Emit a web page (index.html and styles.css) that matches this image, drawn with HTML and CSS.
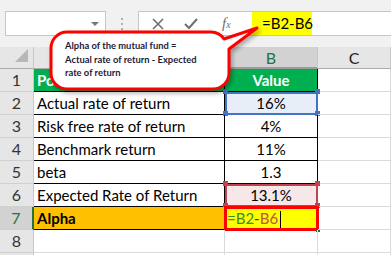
FILE: index.html
```html
<!DOCTYPE html>
<html lang="en">
<head>
    <meta charset="UTF-8">
    <title>Alpha of the mutual fund</title>
    <link rel="stylesheet" href="styles.css">
</head>
<body>

    <div class="formula-bar">
        <div class="name-box">
            <span class="name-arrow"></span>
        </div>
        <div class="grip">
            <span></span><span></span><span></span>
        </div>
        <div class="formula-box">
            <div class="fx-tools">
                <svg class="tool" width="14" height="14" viewBox="0 0 14 14">
                    <path d="M2 2 L12 12 M12 2 L2 12" stroke="#6f6f6f" stroke-width="1.6" fill="none"/>
                </svg>
                <svg class="tool" width="16" height="14" viewBox="0 0 16 14">
                    <path d="M2 7 L6 11 L14 2" stroke="#6f6f6f" stroke-width="2" fill="none"/>
                </svg>
                <span class="fx">f<sub>x</sub></span>
            </div>
            <div class="formula-input">
                <span class="formula-hl">=B2-B6</span>
            </div>
        </div>
    </div>

    <div class="sheet">
        <div class="corner"><span class="corner-tri"></span></div>
        <div class="col-head"></div>
        <div class="col-head active">B</div>
        <div class="col-head">C</div>

        <div class="row-head">1</div>
        <div class="cell t head-green">Po</div>
        <div class="cell t head-green center">Value</div>
        <div class="cell"></div>

        <div class="row-head">2</div>
        <div class="cell t">Actual rate of return</div>
        <div class="cell t center sel-blue">16%
            <i class="h tl"></i><i class="h tr"></i><i class="h bl"></i><i class="h br"></i>
        </div>
        <div class="cell"></div>

        <div class="row-head">3</div>
        <div class="cell t">Risk free rate of return</div>
        <div class="cell t center">4%</div>
        <div class="cell"></div>

        <div class="row-head">4</div>
        <div class="cell t">Benchmark return</div>
        <div class="cell t center">11%</div>
        <div class="cell"></div>

        <div class="row-head">5</div>
        <div class="cell t">beta</div>
        <div class="cell t center">1.3</div>
        <div class="cell"></div>

        <div class="row-head">6</div>
        <div class="cell t">Expected Rate of Return</div>
        <div class="cell t center sel-red">13.1%
            <i class="h tl"></i><i class="h tr"></i><i class="h bl"></i><i class="h br"></i>
        </div>
        <div class="cell"></div>

        <div class="row-head active">7</div>
        <div class="cell t alpha">Alpha</div>
        <div class="cell t editing"><span class="ref-a">=B2</span><span class="op">-</span><span class="ref-b">B6</span><span class="caret"></span><i class="fill-handle"></i></div>
        <div class="cell"></div>

        <div class="row-head">8</div>
        <div class="cell"></div>
        <div class="cell"></div>
        <div class="cell"></div>

        <div class="row-head"></div>
        <div class="cell"></div>
        <div class="cell"></div>
        <div class="cell"></div>
    </div>

    <!-- callout over the sheet -->
    <svg class="callout-shape" width="391" height="255" viewBox="0 0 391 255">
        <path d="M67 32 H211 A16 16 0 0 1 224 39 L257 28 L229 49 V73 A16 16 0 0 1 213 89 H67 A16 16 0 0 1 51 73 V48 A16 16 0 0 1 67 32 Z"
              fill="#fff" stroke="#ff0000" stroke-width="3" stroke-linejoin="round"/>
    </svg>
    <div class="callout-text">
        Alpha of the mutual fund =<br>
        Actual rate of return - Expected<br>
        rate of return
    </div>

</body>
</html>
```

FILE: styles.css
```css
* {
    margin: 0;
    padding: 0;
    box-sizing: border-box;
}

body {
    width: 391px;
    height: 255px;
    overflow: hidden;
    background: #fff;
    font-family: 'Lato', 'Liberation Sans', sans-serif;
    color: #000;
    position: relative;
}

/* formula bar */
.formula-bar {
    height: 47px;
    background: #f1f1f1;
    display: flex;
    align-items: flex-start;
    padding: 11px 0 0 5px;
}

.name-box {
    width: 101px;
    height: 25px;
    background: #fff;
    border: 1px solid #c6c6c6;
    position: relative;
}

.name-arrow {
    position: absolute;
    right: 6px;
    top: 10px;
    border-left: 4px solid transparent;
    border-right: 4px solid transparent;
    border-top: 4px solid #777;
}

.grip {
    width: 32px;
    height: 25px;
    display: flex;
    flex-direction: column;
    align-items: center;
    justify-content: center;
    gap: 3px;
}

.grip span {
    width: 2px;
    height: 2px;
    background: #b0b0b0;
}

.formula-box {
    flex: 1;
    height: 25px;
    margin-right: -4px;
    background: #fff;
    border: 1px solid #c6c6c6;
    display: flex;
}

.fx-tools {
    width: 112px;
    display: flex;
    align-items: center;
    padding-left: 12px;
    gap: 18px;
}

.fx {
    font-family: 'Liberation Serif', serif;
    font-style: italic;
    font-size: 15px;
    color: #6f6f6f;
    margin-left: 5px;
}

.fx sub {
    font-size: 10px;
    vertical-align: baseline;
}

.formula-input {
    flex: 1;
    padding-left: 1px;
}

.formula-hl {
    display: inline-block;
    height: 23px;
    width: 60px;
    background: #ffff00;
    font-size: 15px;
    line-height: 23px;
    padding-left: 10px;
    white-space: nowrap;
}

/* sheet grid */
.sheet {
    display: grid;
    grid-template-columns: 34px 191px 93px 1fr;
    grid-template-rows: 22px;
    grid-auto-rows: 23px;
    font-size: 15px;
}

.corner {
    background: #e6e6e6;
    border-right: 1px solid #c8c8c8;
    border-bottom: 1px solid #ababab;
    position: relative;
}

.corner-tri {
    position: absolute;
    right: 5px;
    bottom: 6px;
    width: 0;
    height: 0;
    border-left: 13px solid transparent;
    border-bottom: 13px solid #b7b7b7;
}

.col-head {
    background: #e6e6e6;
    border-right: 1px solid #c8c8c8;
    border-bottom: 1px solid #ababab;
    text-align: center;
    line-height: 21px;
    font-size: 16px;
    color: #222;
}

.col-head.active {
    background: #d2d2d2;
    color: #217346;
    border-bottom: 2px solid #9b9b9b;
}

.row-head {
    background: #e6e6e6;
    border-right: 1px solid #c8c8c8;
    border-bottom: 1px solid #d0d0d0;
    text-align: center;
    line-height: 22px;
    font-size: 16px;
    color: #333;
}

.row-head.active {
    background: #d2d2d2;
    color: #217346;
    border-right: 2px solid #217346;
}

.cell {
    border-right: 1px solid #dadada;
    border-bottom: 1px solid #dadada;
    line-height: 22px;
    padding-left: 3px;
    white-space: nowrap;
    position: relative;
}

.cell.t {
    border-right-color: #000;
    border-bottom-color: #000;
}

.center {
    text-align: center;
    padding-left: 0;
}

.head-green {
    background: #00b050;
    color: #fff;
    font-weight: bold;
}

.alpha {
    background: #ffc000;
    font-weight: bold;
}

/* selected ranges while editing */
.sel-blue {
    background: #e8eef8;
    outline: 2px solid #4472c4;
    outline-offset: -2px;
}

.sel-red {
    background: #f6e8e9;
    outline: 2px solid #c4424e;
    outline-offset: -2px;
}

.h {
    position: absolute;
    width: 5px;
    height: 5px;
}

.sel-blue .h { background: #4472c4; }
.sel-red .h { background: #c4424e; }

.tl { left: -2px; top: -3px; }
.tr { right: -3px; top: -3px; }
.bl { left: -2px; bottom: -2px; }
.br { right: -3px; bottom: -2px; }

.editing {
    background: #ffff00;
    outline: 3px solid #ff0000;
    outline-offset: -2px;
    padding-left: 2px;
}

.ref-a { color: #3b8a2c; }
.op { color: #333; }
.ref-b { color: #c0504d; }

.caret {
    display: inline-block;
    width: 1px;
    height: 18px;
    background: #000;
    vertical-align: middle;
    margin-left: 2px;
}

.fill-handle {
    position: absolute;
    right: -3px;
    bottom: -3px;
    width: 4px;
    height: 3px;
    background: #217346;
}

/* callout */
.callout-shape {
    position: absolute;
    left: 0;
    top: 0;
    filter: drop-shadow(2px 3px 2px rgba(0, 0, 0, 0.3));
}

.callout-text {
    position: absolute;
    left: 65px;
    top: 39px;
    font-size: 9.4px;
    font-weight: bold;
    line-height: 13.5px;
    color: #1c1c3a;
}
```
